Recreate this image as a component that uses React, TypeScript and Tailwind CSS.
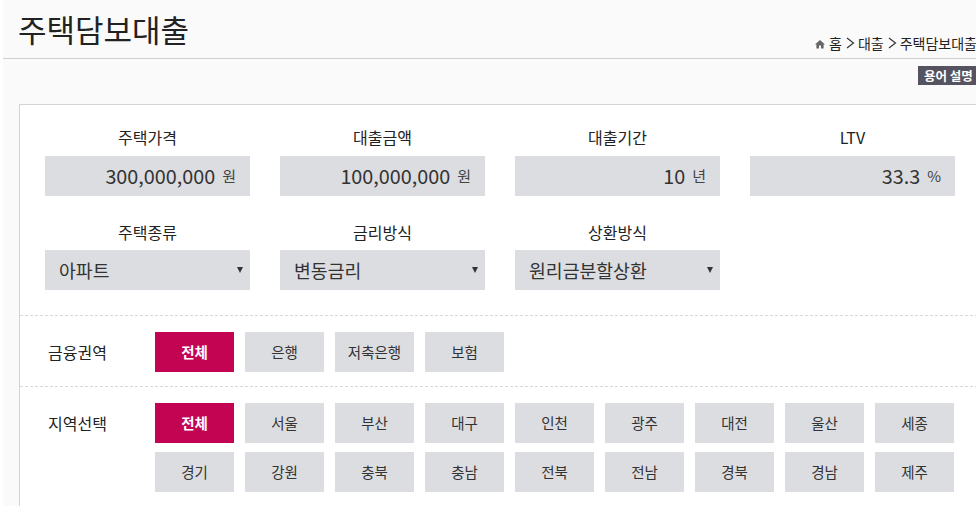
import React from "react";

const FONT = '"Noto Sans CJK KR", "Liberation Sans", sans-serif';

const topFields = [
  { label: "주택가격", value: "300,000,000", unit: "원" },
  { label: "대출금액", value: "100,000,000", unit: "원" },
  { label: "대출기간", value: "10", unit: "년" },
  { label: "LTV", value: "33.3", unit: "%" },
];

const selects = [
  { label: "주택종류", value: "아파트" },
  { label: "금리방식", value: "변동금리" },
  { label: "상환방식", value: "원리금분할상환" },
];

const sectors = ["전체", "은행", "저축은행", "보험"];
const regions = [
  "전체", "서울", "부산", "대구", "인천", "광주", "대전", "울산", "세종",
  "경기", "강원", "충북", "충남", "전북", "전남", "경북", "경남", "제주",
];

const Chip = ({ text, active }: { text: string; active?: boolean }) => (
  <div
    className={
      active
        ? "w-[79px] h-10 flex items-center justify-center text-[14.5px] font-bold text-white bg-[#c30452]"
        : "w-[79px] h-10 flex items-center justify-center text-[14.5px] text-[#333] bg-[#dcdde1]"
    }
  >
    {text}
  </div>
);

const Chevron = () => (
  <svg width="9" height="12" viewBox="0 0 9 12" className="ml-[4px] mr-[3px] shrink-0">
    <path d="M1 1 L7.5 6 L1 11" fill="none" stroke="#333" strokeWidth="1.2" />
  </svg>
);

const App = () => {
  return (
    <div className="w-[976px] h-[506px] overflow-hidden bg-white pl-[3px]" style={{ fontFamily: FONT }}>
      <div className="w-[973px] h-full bg-[#fafafa]">
        <div className="h-[59px] border-b border-[#cfcfcf] flex justify-between items-end">
          <h1 className="ml-[15px] mb-[7px] text-[31px] leading-[44px] text-[#222] font-normal">주택담보대출</h1>
          <div className="flex items-center whitespace-nowrap text-sm leading-[16px] text-[#222] mb-[7px] -mr-[1px] shrink-0">
            <svg width="10" height="10" viewBox="0 0 10 10" className="mr-[4px] mt-[1px] shrink-0">
              <path d="M5 1 L10 5.5 H8.6 V9.5 H6 V6.5 H4 V9.5 H1.4 V5.5 H0 Z" fill="#666" />
            </svg>
            <span>홈</span>
            <Chevron />
            <span>대출</span>
            <Chevron />
            <span>주택담보대출</span>
          </div>
        </div>
        <div className="flex justify-end h-[45px] pt-[7px]">
          <div className="w-[58px] h-[19px] bg-[#55535f] text-white text-[12.5px] leading-[19px] font-bold pl-[6px] whitespace-nowrap">
            용어 설명
          </div>
        </div>
        <div className="ml-4 w-[980px] h-[420px] bg-white border border-[#d4d4d4]">
          <div className="pl-[25px] pt-[21px]">
            <div className="flex gap-[30px]">
              {topFields.map((f) => (
                <div key={f.label} className="w-[205px]">
                  <div className="h-[30px] text-center text-base leading-[22px] text-[#222]">{f.label}</div>
                  <div className="h-10 bg-[#dcdde1] flex items-center justify-end pr-[14px] text-[#333]">
                    <span className="text-[19.8px]">{f.value}</span>
                    <span className="text-[15px] ml-[7px] text-[#444]">{f.unit}</span>
                  </div>
                </div>
              ))}
            </div>
            <div className="flex gap-[30px] mt-[25px]">
              {selects.map((s) => (
                <div key={s.label} className="w-[205px]">
                  <div className="h-[29px] text-center text-base leading-[22px] text-[#222]">{s.label}</div>
                  <div className="h-10 bg-[#dcdde1] flex items-center justify-between pl-[14px] pr-[5px] text-[#333]">
                    <span className="text-[18.3px] pt-[1px]">{s.value}</span>
                    <svg width="6" height="6" viewBox="0 0 6 6" className="mr-[2px]">
                      <path d="M0 0 H6 L3 6 Z" fill="#333" />
                    </svg>
                  </div>
                </div>
              ))}
            </div>
          </div>
          <div className="mt-[25px] border-t border-dashed border-[#d8d8d8] h-[71px] flex pt-[16px]">
            <div className="w-[135px] pl-[28px] pt-[8px] text-base text-[#222]">금융권역</div>
            <div className="flex gap-[11px] h-10">
              {sectors.map((t, i) => (
                <Chip key={t} text={t} active={i === 0} />
              ))}
            </div>
          </div>
          <div className="border-t border-dashed border-[#d8d8d8] pt-[16px] flex">
            <div className="w-[135px] pl-[28px] pt-[8px] text-base text-[#222]">지역선택</div>
            <div className="w-[800px] flex flex-wrap gap-x-[11px] gap-y-[9px]">
              {regions.map((t, i) => (
                <Chip key={t + i} text={t} active={i === 0} />
              ))}
            </div>
          </div>
        </div>
      </div>
    </div>
  );
};

export default App;
